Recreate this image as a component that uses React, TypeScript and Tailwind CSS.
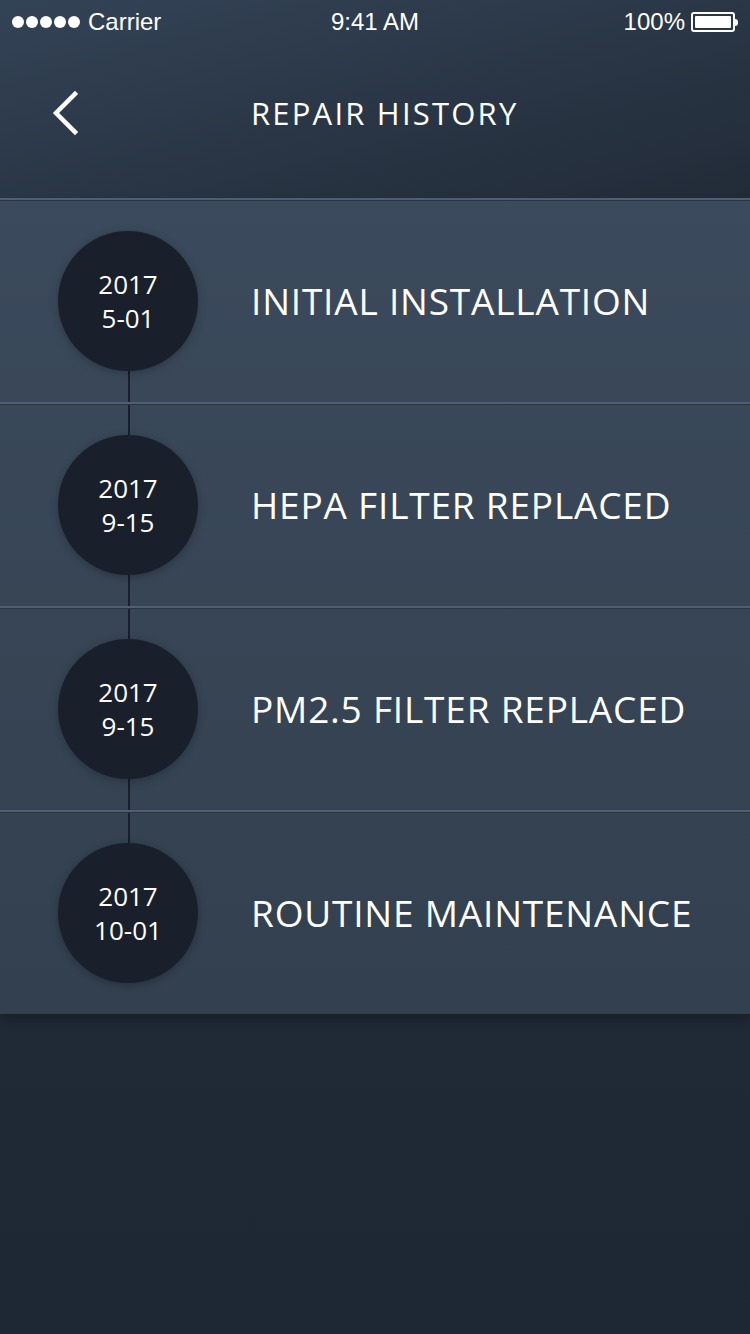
interface Repair {
  year: string;
  date: string;
  title: string;
}

const repairs: Repair[] = [
  { year: "2017", date: "5-01", title: "INITIAL INSTALLATION" },
  { year: "2017", date: "9-15", title: "HEPA FILTER REPLACED" },
  { year: "2017", date: "9-15", title: "PM2.5 FILTER REPLACED" },
  { year: "2017", date: "10-01", title: "ROUTINE MAINTENANCE" },
];

const heading = { fontFamily: '"Open Sans", "Noto Sans", sans-serif' };

function StatusBar() {
  return (
    <div
      className="relative flex h-[44px] items-center justify-between px-[12px] text-[24px] text-white"
      style={{ fontFamily: '"Liberation Sans", Arial, sans-serif' }}
    >
      <div className="flex items-center gap-[8px]">
        <div className="flex gap-[2px]">
          {[0, 1, 2, 3, 4].map((i) => (
            <span key={i} className="block h-[12px] w-[12px] rounded-full bg-white" />
          ))}
        </div>
        <span>Carrier</span>
      </div>
      <span className="absolute left-1/2 -translate-x-1/2">9:41 AM</span>
      <div className="flex items-center gap-[6px]">
        <span>100%</span>
        <div className="flex items-center">
          <div className="flex h-[20px] w-[44px] items-center rounded-[3px] border-2 border-white p-[2px]">
            <div className="h-full w-full rounded-[1px] bg-white" />
          </div>
          <div className="h-[7px] w-[3px] rounded-r-sm bg-white" />
        </div>
      </div>
    </div>
  );
}

export default function App() {
  return (
    <div className="flex h-[1334px] w-[750px] flex-col overflow-hidden bg-linear-to-b from-[#232f3d] to-[#1e2834]">
      <div className="bg-linear-to-br from-[#334356] to-[#222b38] pb-[16px]">
        <StatusBar />
        <div className="flex h-[138px] items-center">
          <svg className="ml-[50px]" width="30" height="46" viewBox="0 0 30 46" fill="none">
            <path d="M25 4 L6 23 L25 42" stroke="white" strokeWidth="4.5" strokeLinecap="square" />
          </svg>
          <h1
            className="ml-[171px] text-[31px] font-medium tracking-[2.2px] text-white"
            style={heading}
          >
            REPAIR HISTORY
          </h1>
        </div>
      </div>

      <div className="relative bg-linear-to-b from-[#3b4a5c] to-[#33404f] shadow-[0_6px_10px_rgba(0,0,0,0.25)]">
        <div className="absolute left-[128px] top-[103px] h-[612px] w-[2px] bg-[#19202b]" />
        {repairs.map((r, i) => (
          <div
            key={i}
            className="relative flex h-[204px] items-center border-t-2 border-[#4f5e72] shadow-[inset_0_1px_0_#2a3544]"
          >
            <div
              className="relative ml-[58px] flex h-[140px] w-[140px] flex-col items-center justify-center rounded-full bg-[#19202b] text-[26px] leading-[34px] text-white shadow-[0_2px_8px_rgba(0,0,0,0.25)]"
              style={heading}
            >
              <span>{r.year}</span>
              <span>{r.date}</span>
            </div>
            <div
              className="ml-[53px] text-[37px] font-medium tracking-[0.8px] text-white"
              style={heading}
            >
              {r.title}
            </div>
          </div>
        ))}
      </div>
    </div>
  );
}
